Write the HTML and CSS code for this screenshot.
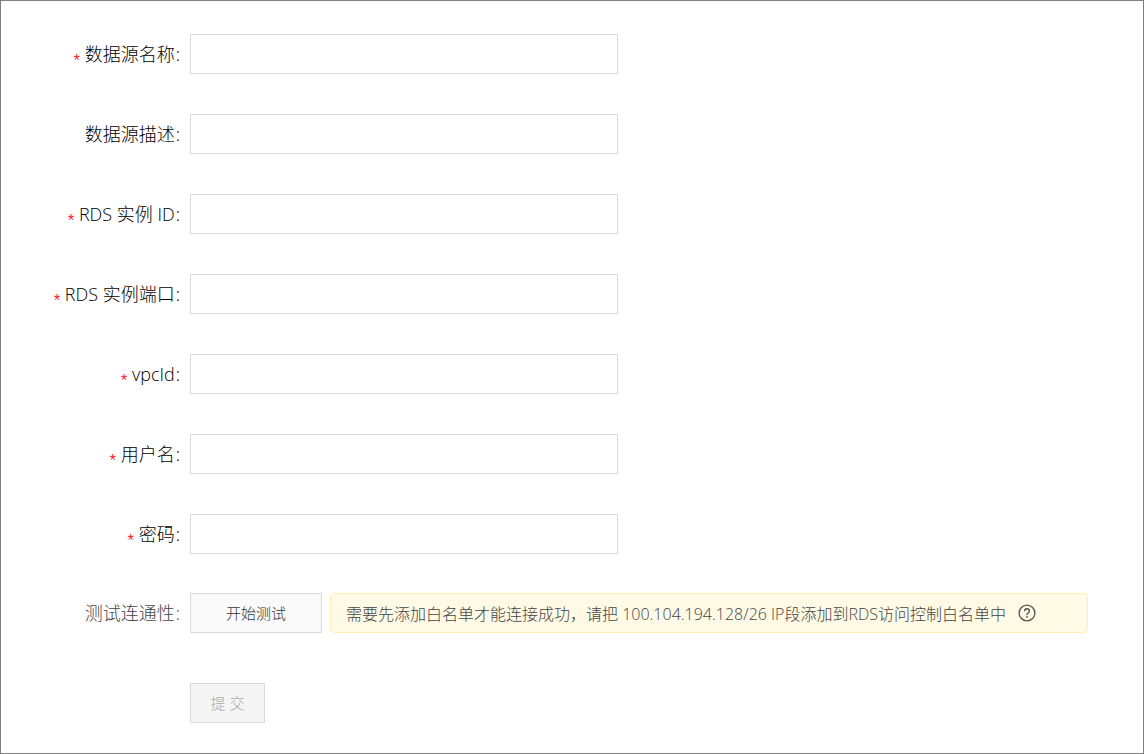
FILE: index.html
```html
<!DOCTYPE html>
<html lang="zh-CN">
<head>
<meta charset="utf-8">
<meta name="viewport" content="width=device-width, initial-scale=1">
<title>数据源</title>
<link rel="stylesheet" href="styles.css">
</head>
<body>
<form class="form">
  <div class="row">
    <label class="label required" for="name">数据源名称</label>
    <input class="input" id="name" type="text">
  </div>
  <div class="row">
    <label class="label" for="desc">数据源描述</label>
    <input class="input" id="desc" type="text">
  </div>
  <div class="row">
    <label class="label required" for="rds-id">RDS 实例 ID</label>
    <input class="input" id="rds-id" type="text">
  </div>
  <div class="row">
    <label class="label required" for="rds-port">RDS 实例端口</label>
    <input class="input" id="rds-port" type="text">
  </div>
  <div class="row">
    <label class="label required" for="vpc">vpcId</label>
    <input class="input" id="vpc" type="text">
  </div>
  <div class="row">
    <label class="label required" for="user">用户名</label>
    <input class="input" id="user" type="text">
  </div>
  <div class="row">
    <label class="label required" for="password">密码</label>
    <input class="input" id="password" type="password">
  </div>
  <div class="row test-row">
    <label class="label muted" for="test">测试连通性</label>
    <div class="test">
      <button class="button test-button" id="test" type="button">开始测试</button>
      <div class="notice">
        <span>需要先添加白名单才能连接成功，请把 100.104.194.128/26 IP段添加到RDS访问控制白名单中</span>
        <svg class="help" viewBox="0 0 18 18" aria-hidden="true">
          <circle cx="9" cy="9" r="7.9"/>
          <path d="M6.6 7.2C6.6 5.6 7.6 4.7 9 4.7s2.4.9 2.4 2.2c0 1.1-.7 1.6-1.4 2.1-.7.4-1 .8-1 1.6v.4"/>
          <circle class="dot" cx="9" cy="12.9" r=".9"/>
        </svg>
      </div>
    </div>
  </div>
  <div class="row submit-row">
    <button class="button submit" type="submit" disabled>提 交</button>
  </div>
</form>
</body>
</html>
```
FILE: styles.css
```css
* {
  box-sizing: border-box;
}

body {
  margin: 0;
  min-height: 100vh;
  border: 1px solid #7f7f7f;
  background: #fff;
  color: #000;
  font-family: "Open Sans", "Noto Sans CJK SC", sans-serif;
  font-weight: 300;
}

.form {
  display: flex;
  flex-direction: column;
  gap: 40px;
  padding: 33px 55px 30px 0;
}

.row {
  display: grid;
  grid-template-columns: 189px minmax(0, 1fr);
  align-items: center;
}

.label {
  padding-right: 10px;
  font-size: 18px;
  line-height: 40px;
  text-align: right;
  white-space: nowrap;
}

.label::after {
  content: ":";
  margin-left: 1px;
}

.required::before {
  content: "*";
  margin-right: 3px;
  color: #ff1a2b;
  font-family: "Liberation Mono", monospace;
  font-size: 16px;
  line-height: 1;
  vertical-align: -5px;
}

.muted {
  color: #444;
}

.input {
  width: 100%;
  max-width: 428px;
  height: 40px;
  padding: 0 12px;
  border: 1px solid #d9d9d9;
  background: #fff;
  font: inherit;
  font-size: 16px;
}

.test-row {
  margin-top: -1px;
}

.test {
  display: flex;
  gap: 8px;
}

.button {
  height: 40px;
  padding: 0 0 2px;
  border: 1px solid #d9d9d9;
  background: #fafafa;
  color: #333;
  font: inherit;
  font-size: 15px;
}

.test-button {
  flex: none;
  width: 132px;
}

.notice {
  display: flex;
  flex: 1;
  align-items: center;
  gap: 12px;
  min-height: 40px;
  padding: 0 15px;
  border: 1px solid #ffeeb0;
  border-radius: 5px;
  background: #fffae5;
  color: #444;
  font-size: 16px;
}

.help {
  flex: none;
  width: 18px;
  height: 18px;
  fill: none;
  stroke: #555;
  stroke-width: 1.4;
}

.help .dot {
  fill: #555;
  stroke: none;
}

.submit-row {
  margin-top: 10px;
}

.submit {
  grid-column: 2;
  justify-self: start;
  width: 75px;
  background: #f5f5f5;
  color: #aaa;
}
```
